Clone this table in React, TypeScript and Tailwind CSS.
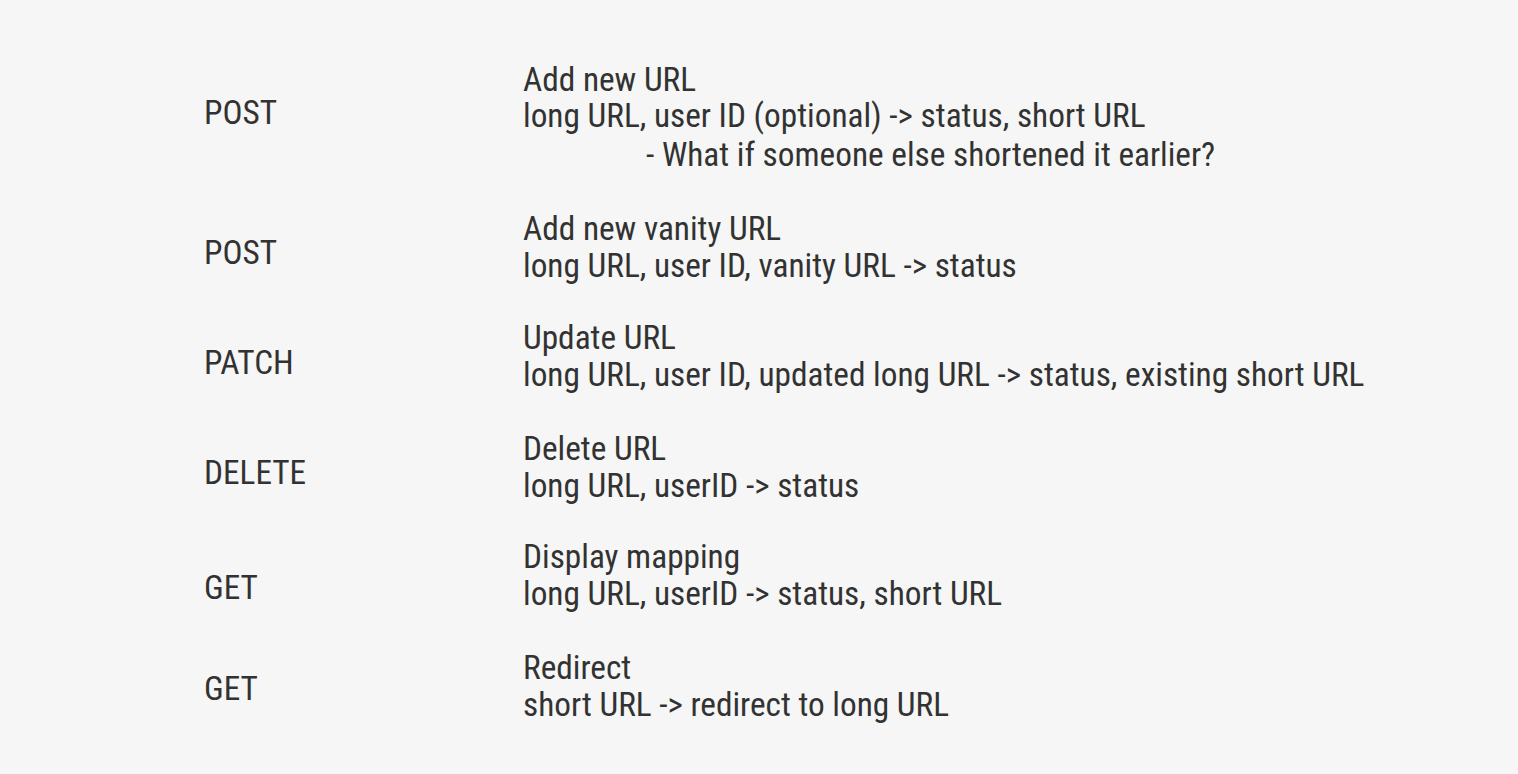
type Line = { text: string; className?: string }
type Endpoint = { method: string; rowClass: string; labelClass: string; lines: Line[] }

// spacing follows the original slide, which isn't perfectly regular
const endpoints: Endpoint[] = [
  {
    method: 'POST',
    rowClass: 'mt-[62px]',
    labelClass: 'mt-[32px]',
    lines: [
      { text: 'Add new URL', className: 'leading-[35px]' },
      { text: 'long URL, user ID (optional) -> status, short URL' },
      { text: '- What if someone else shortened it earlier?', className: 'mt-[2px] pl-[123px]' },
    ],
  },
  {
    method: 'POST',
    rowClass: 'mt-[37px]',
    labelClass: 'mt-[24px]',
    lines: [{ text: 'Add new vanity URL' }, { text: 'long URL, user ID, vanity URL -> status' }],
  },
  {
    method: 'PATCH',
    rowClass: 'mt-[35px]',
    labelClass: 'mt-[25px]',
    lines: [{ text: 'Update URL' }, { text: 'long URL, user ID, updated long URL -> status, existing short URL' }],
  },
  {
    method: 'DELETE',
    rowClass: 'mt-[37px]',
    labelClass: 'mt-[24px]',
    lines: [{ text: 'Delete URL' }, { text: 'long URL, userID -> status' }],
  },
  {
    method: 'GET',
    rowClass: 'mt-[35px]',
    labelClass: 'mt-[30px]',
    lines: [{ text: 'Display mapping', className: 'leading-[36px]' }, { text: 'long URL, userID -> status, short URL' }],
  },
  {
    method: 'GET',
    rowClass: 'mt-[38px]',
    labelClass: 'mt-[20px]',
    lines: [{ text: 'Redirect', className: 'leading-[36px]' }, { text: 'short URL -> redirect to long URL' }],
  },
]

export default function App() {
  return (
    <div className="h-[774px] w-full overflow-hidden bg-[#f5f6f5] font-['Roboto_Condensed','Roboto','Liberation_Sans',sans-serif] text-[33.3px] leading-[37px] text-[#323232]">
      <div className="flex flex-col pl-[204px]">
        {endpoints.map((ep, i) => (
          <div key={i} className={`flex ${ep.rowClass}`}>
            <div className={`w-[319px] shrink-0 ${ep.labelClass}`}>{ep.method}</div>
            <div className="flex flex-col">
              {ep.lines.map((l) => (
                <div key={l.text} className={`whitespace-nowrap ${l.className ?? ''}`}>
                  {l.text}
                </div>
              ))}
            </div>
          </div>
        ))}
      </div>
    </div>
  )
}
